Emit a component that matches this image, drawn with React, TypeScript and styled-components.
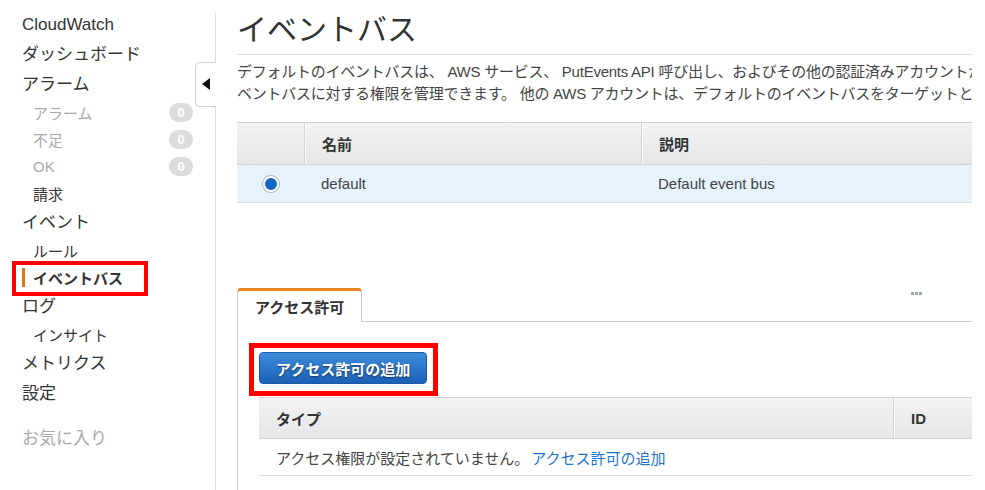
import React from "react";
import styled, { createGlobalStyle } from "styled-components";

const GlobalStyle = createGlobalStyle`
  html, body { margin: 0; padding: 0; background: #fff; }
  body {
    font-family: "Liberation Sans", "Noto Sans CJK JP", sans-serif;
    color: #333;
    width: 985px;
    height: 490px;
    overflow: hidden;
  }
  * { box-sizing: border-box; }
`;

const Page = styled.div`
  display: flex;
  width: 985px;
  height: 490px;
  overflow: hidden;
`;

const Sidebar = styled.nav`
  width: 215px;
  flex: none;
  padding: 9px 22px 0 22px;
  display: flex;
  flex-direction: column;
`;

const NavItem = styled.div<{ $sub?: boolean; $muted?: boolean; $active?: boolean; $gap?: number }>`
  position: relative;
  display: flex;
  align-items: center;
  justify-content: space-between;
  height: ${(p) => (p.$sub ? 27 : 30)}px;
  margin-top: ${(p) => p.$gap ?? 0}px;
  padding-left: ${(p) => (p.$sub ? 11 : 0)}px;
  padding-bottom: ${(p) => (p.$sub ? 0 : 4)}px;
  font-size: ${(p) => (p.$sub ? 15 : 17)}px;
  font-weight: ${(p) => (p.$active ? 700 : 400)};
  color: ${(p) => (p.$muted ? "#aaa" : "#333")};
  white-space: nowrap;
`;

const Brand = styled.div`
  height: 30px;
  display: flex;
  align-items: center;
  padding-top: 1px;
  font-size: 17px;
  color: #333;
`;

const ActiveBar = styled.span`
  position: absolute;
  left: 0;
  top: 4px;
  width: 3px;
  height: 19px;
  background: #ec7211;
`;

const Annotation = styled.span<{ $w: number }>`
  position: absolute;
  border: ${(p) => p.$w}px solid #ff0000;
  pointer-events: none;
`;

const NavAnnotation = styled(Annotation)`
  left: -10px;
  top: -3px;
  width: 136px;
  height: 35px;
`;

const Badge = styled.span`
  width: 24px;
  height: 19px;
  border-radius: 10px;
  background: #dcdcdc;
  color: #fff;
  font-size: 13px;
  font-weight: 700;
  display: flex;
  align-items: center;
  justify-content: center;
`;

const Divider = styled.div`
  position: relative;
  width: 1px;
  flex: none;
  margin-top: 13px;
  background: #dddddd;
`;

const CollapseTab = styled.button`
  position: absolute;
  left: -20px;
  top: 49px;
  width: 21px;
  height: 45px;
  padding: 0 1px 2px 0;
  background: #fff;
  border: 1px solid #cfcfcf;
  border-right: none;
  border-radius: 5px 0 0 5px;
  display: flex;
  align-items: center;
  justify-content: center;
`;

const Triangle = styled.span`
  width: 0;
  height: 0;
  border-top: 6px solid transparent;
  border-bottom: 6px solid transparent;
  border-right: 8px solid #111;
`;

const Main = styled.main`
  flex: 1;
  margin-right: 13px;
  overflow: hidden;
  padding: 12px 0 0 21px;
`;

const Content = styled.div`
  width: 1000px;
`;

const Title = styled.h1`
  margin: 0;
  height: 43px;
  font-size: 30px;
  line-height: 36px;
  font-weight: 400;
  color: #333;
  border-bottom: 1px solid #dddddd;
`;

const Description = styled.p`
  margin: 6px 0 0;
  font-size: 15px;
  line-height: 22px;
  letter-spacing: -0.25px;
  color: #444;
  white-space: nowrap;
`;

const GridRow = styled.div<{ $cols: string; $head?: boolean; $h: number; $selected?: boolean }>`
  display: grid;
  grid-template-columns: ${(p) => p.$cols};
  height: ${(p) => p.$h}px;
  font-size: 15px;
  background: ${(p) =>
    p.$head
      ? "linear-gradient(#f3f3f3, #e6e6e6)"
      : p.$selected
      ? "#e6f2fc"
      : "#fff"};
  border-top: ${(p) => (p.$head ? "1px solid #d2d2d2" : "none")};
  border-bottom: 1px solid ${(p) => (p.$head ? "#d2d2d2" : "#dddddd")};
`;

const Cell = styled.div<{ $head?: boolean; $sep?: boolean; $center?: boolean }>`
  display: flex;
  align-items: center;
  justify-content: ${(p) => (p.$center ? "center" : "flex-start")};
  padding-left: ${(p) => (p.$center ? 0 : 17)}px;
  font-weight: ${(p) => (p.$head ? 700 : 400)};
  color: ${(p) => (p.$head ? "#333" : "#444")};
  border-left: ${(p) => (p.$sep ? "1px solid #d4d4d4" : "none")};
  box-shadow: ${(p) => (p.$sep ? "inset 1px 0 0 #fafafa" : "none")};
  white-space: nowrap;
`;

const BusTable = styled.div`
  margin-top: 17px;
`;

const Radio = styled.span`
  width: 18px;
  height: 18px;
  border-radius: 50%;
  border: 1px solid #a9b3bd;
  background: #fff;
  padding: 2px;
  display: flex;
  margin-left: 1px;
  &::after {
    content: "";
    flex: 1;
    border-radius: 50%;
    background: #1466c2;
  }
`;

const TabBar = styled.div`
  margin-top: 85px;
  display: flex;
  align-items: flex-end;
  height: 34px;
  border-bottom: 1px solid #cccccc;
`;

const Tab = styled.div`
  height: 34px;
  margin-bottom: -1px;
  padding: 0 17px;
  background: #fff;
  border: 1px solid #cccccc;
  border-top: 3px solid #e8841f;
  border-bottom: none;
  border-radius: 4px 4px 0 0;
  font-size: 15px;
  font-weight: 700;
  color: #333;
  display: flex;
  align-items: center;
`;

const Dots = styled.div`
  align-self: flex-start;
  margin: 4px 0 0 549px;
  display: flex;
  gap: 1px;
  & > span {
    width: 3px;
    height: 3px;
    background: #9aa6b4;
  }
`;

const Panel = styled.div`
  border-left: 1px solid #cccccc;
  padding: 30px 0 40px 21px;
`;

const ButtonWrap = styled.div`
  position: relative;
  display: inline-flex;
`;

const PrimaryButton = styled.button`
  height: 32px;
  padding: 0 16px;
  font-family: inherit;
  font-size: 15px;
  font-weight: 700;
  color: #fff;
  background: linear-gradient(#3d8ddd, #1b60b6);
  border: 1px solid #1a5aa8;
  border-radius: 4px;
  text-shadow: 0 1px 2px rgba(0, 0, 0, 0.55);
  white-space: nowrap;
`;

const ButtonAnnotation = styled(Annotation)`
  left: -10px;
  top: -9px;
  right: -11px;
  bottom: -12px;
`;

const PermTable = styled.div`
  margin-top: 13px;
`;

const Link = styled.a`
  color: #1f73d0;
  text-decoration: none;
  margin-left: 2px;
`;

export default function App() {
  return (
    <>
      <GlobalStyle />
      <Page>
        <Sidebar>
          <Brand>CloudWatch</Brand>
          <NavItem>ダッシュボード</NavItem>
          <NavItem>アラーム</NavItem>
          <NavItem $sub $muted>
            アラーム<Badge>0</Badge>
          </NavItem>
          <NavItem $sub $muted>
            不足<Badge>0</Badge>
          </NavItem>
          <NavItem $sub $muted>
            OK<Badge>0</Badge>
          </NavItem>
          <NavItem $sub>請求</NavItem>
          <NavItem>イベント</NavItem>
          <NavItem $sub>ルール</NavItem>
          <NavItem $sub $active>
            <ActiveBar />
            イベントバス
            <NavAnnotation $w={4} />
          </NavItem>
          <NavItem>ログ</NavItem>
          <NavItem $sub>インサイト</NavItem>
          <NavItem>メトリクス</NavItem>
          <NavItem>設定</NavItem>
          <NavItem $muted $gap={15}>
            お気に入り
          </NavItem>
        </Sidebar>
        <Divider>
          <CollapseTab aria-label="collapse">
            <Triangle />
          </CollapseTab>
        </Divider>
        <Main>
          <Content>
            <Title>イベントバス</Title>
            <Description>
              デフォルトのイベントバスは、 AWS サービス、 PutEvents API 呼び出し、およびその他の認証済みアカウントからイベントを受け取ります。デフォルトのイ
              <br />
              ベントバスに対する権限を管理できます。 他の AWS アカウントは、デフォルトのイベントバスをターゲットとして指定できます。
            </Description>
            <BusTable>
              <GridRow $cols="67px 337px 596px" $head $h={43}>
                <Cell $head />
                <Cell $head $sep>名前</Cell>
                <Cell $head $sep>説明</Cell>
              </GridRow>
              <GridRow $cols="67px 337px 596px" $selected $h={38}>
                <Cell $center>
                  <Radio />
                </Cell>
                <Cell>default</Cell>
                <Cell>Default event bus</Cell>
              </GridRow>
            </BusTable>
            <TabBar>
              <Tab>アクセス許可</Tab>
              <Dots>
                <span />
                <span />
                <span />
              </Dots>
            </TabBar>
            <Panel>
              <ButtonWrap>
                <PrimaryButton>アクセス許可の追加</PrimaryButton>
                <ButtonAnnotation $w={5} />
              </ButtonWrap>
              <PermTable>
                <GridRow $cols="634px 345px" $head $h={42}>
                  <Cell $head>タイプ</Cell>
                  <Cell $head $sep>ID</Cell>
                </GridRow>
                <GridRow $cols="979px" $h={37}>
                  <Cell>
                    アクセス権限が設定されていません。<Link href="#">アクセス許可の追加</Link>
                  </Cell>
                </GridRow>
              </PermTable>
            </Panel>
          </Content>
        </Main>
      </Page>
    </>
  );
}
